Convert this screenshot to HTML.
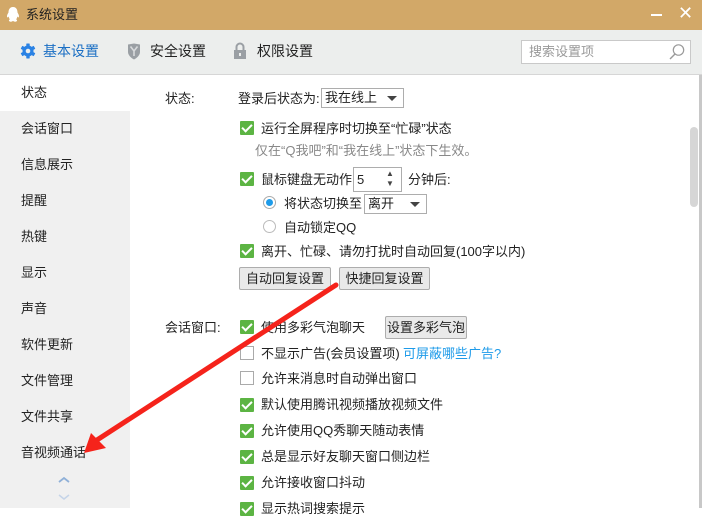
<!DOCTYPE html>
<html><head><meta charset="utf-8"><style>
body{margin:0;width:702px;height:508px;overflow:hidden;font-family:"Liberation Sans","Noto Sans CJK SC",sans-serif;font-size:13px;color:#222;background:#fff;position:relative}
.a{position:absolute;white-space:nowrap;line-height:15px}
.cb{position:absolute;width:14px;height:14px;background:#5cb443;border-radius:1px}
.cb:after{content:"";position:absolute;left:4px;top:1px;width:4px;height:8px;border:solid #fff;border-width:0 2px 2px 0;transform:rotate(45deg)}
.cu{position:absolute;width:12px;height:12px;border:1px solid #aaa;background:#fff}
.btn{position:absolute;border:1px solid #adadad;background:#e9e9e9;border-radius:2px;text-align:center;line-height:21px;height:21px}
.sel{position:absolute;border:1px solid #adadad;background:#fff;height:18px;line-height:18px;padding-left:3px}
.sel:after{content:"";position:absolute;right:6px;top:7px;border:5px solid transparent;border-top:5px solid #444;border-bottom:0}
.sb{position:absolute;left:21px}
</style></head><body>
<div class="a" style="left:0;top:0;width:702px;height:30px;background:#d2a868"></div>
<svg class="a" style="left:6px;top:6px" width="14" height="17" viewBox="0 0 14 17"><path d="M7 1C3.5 1 2.5 4 2.5 6.5 1.5 8 0.5 10 1.3 11.5 2 11.3 2.5 10.5 2.5 10.5 3 12 3.5 13 4 13.3 2.5 14 2.5 15.5 4.5 15.7 6 15.8 6.5 15 7 15 7.5 15 8 15.8 9.5 15.7 11.5 15.5 11.5 14 10 13.3 10.5 13 11 12 11.5 10.5 11.5 10.5 12 11.3 12.7 11.5 13.5 10 12.5 8 11.5 6.5 11.5 4 10.5 1 7 1Z" fill="#fff"/></svg>
<div class="a" style="left:26px;top:7px;font-size:13px;color:#222">系统设置</div>
<div class="a" style="left:651px;top:14px;width:11px;height:2px;background:#fff"></div>
<div class="a" style="left:678px;top:4px;color:#fff;font-size:18px;line-height:18px">✕</div>
<div class="a" style="left:0;top:30px;width:702px;height:44px;background:#eceeed;border-bottom:1px solid #d6d6d6"></div>
<svg class="a" style="left:20px;top:43px" width="16" height="16" viewBox="0 0 16 16"><g fill="#2a82e4"><circle cx="8" cy="8" r="5.5"/><g id="t"><rect x="6.3" y="0.5" width="3.4" height="15" rx="0.5"/></g><use href="#t" transform="rotate(60 8 8)"/><use href="#t" transform="rotate(120 8 8)"/></g><circle cx="8" cy="8" r="2.3" fill="#eceeed"/></svg>
<div class="a" style="left:43px;top:43px;font-size:14px;color:#1b6fc4;line-height:17px">基本设置</div>
<svg class="a" style="left:127px;top:43px" width="14" height="17" viewBox="0 0 14 17"><path d="M1 1.5L7 0.5 13 1.5 13 9C13 12 10 15 7 16.5 4 15 1 12 1 9Z" fill="#9a9fa4"/><path d="M3.5 3.5L7 8 10.5 3.5M7 8V13" stroke="#d8dadc" stroke-width="1.6" fill="none"/></svg>
<div class="a" style="left:150px;top:43px;font-size:14px;line-height:17px">安全设置</div>
<svg class="a" style="left:233px;top:42px" width="14" height="18" viewBox="0 0 14 18"><path d="M3.5 8V5A3.5 3.5 0 0 1 10.5 5V8" stroke="#9a9fa4" stroke-width="2" fill="none"/><rect x="1" y="8" width="12" height="9" fill="#9a9fa4"/><rect x="6" y="11" width="2" height="3" fill="#eceeed"/></svg>
<div class="a" style="left:257px;top:43px;font-size:14px;line-height:17px">权限设置</div>
<div class="a" style="left:521px;top:40px;width:168px;height:22px;border:1px solid #c9c9c9;background:#fff"></div>
<div class="a" style="left:529px;top:44px;color:#999">搜索设置项</div>
<svg class="a" style="left:668px;top:43px" width="18" height="18" viewBox="0 0 18 18"><circle cx="10.5" cy="7" r="5.2" stroke="#999" stroke-width="1.2" fill="none"/><path d="M7 11L2 16" stroke="#999" stroke-width="1.4"/></svg>
<div class="a" style="left:0;top:75px;width:130px;height:433px;background:#f0f0f0"></div>
<div class="a" style="left:0;top:75px;width:130px;height:36px;background:#fff"></div>
<div class="sb a" style="top:85px">状态</div>
<div class="sb a" style="top:121px">会话窗口</div>
<div class="sb a" style="top:157px">信息展示</div>
<div class="sb a" style="top:193px">提醒</div>
<div class="sb a" style="top:229px">热键</div>
<div class="sb a" style="top:265px">显示</div>
<div class="sb a" style="top:301px">声音</div>
<div class="sb a" style="top:337px">软件更新</div>
<div class="sb a" style="top:373px">文件管理</div>
<div class="sb a" style="top:409px">文件共享</div>
<div class="sb a" style="top:445px">音视频通话</div>
<svg class="a" style="left:58px;top:475px" width="12" height="28" viewBox="0 0 12 28"><path d="M1 7L6 3 11 7" stroke="#8fb0d8" stroke-width="1.8" fill="none"/><path d="M1 20L6 24 11 20" stroke="#c5d4e8" stroke-width="1.5" fill="none"/></svg>
<div class="a" style="left:699px;top:75px;width:3px;height:433px;background:#c8c8c8"></div>
<div class="a" style="left:690px;top:127px;width:8px;height:80px;background:#d6d6d6;border-radius:4px"></div>
<div class="a" style="left:165px;top:91px">状态:</div>
<div class="a" style="left:238px;top:91px">登录后状态为:</div>
<div class="sel" style="left:321px;top:88px;width:78px">我在线上</div>
<div class="cb" style="left:240px;top:121px"></div><div class="a" style="left:261px;top:121px">运行全屏程序时切换至“忙碌”状态</div>
<div class="a" style="left:255px;top:143px;color:#888">仅在“Q我吧”和“我在线上”状态下生效。</div>
<div class="cb" style="left:240px;top:172px"></div><div class="a" style="left:261px;top:172px">鼠标键盘无动作</div>
<div class="a" style="left:353px;top:167px;width:47px;height:23px;border:1px solid #adadad;background:#fff"></div>
<div class="a" style="left:357px;top:172px">5</div>
<div class="a" style="left:386px;top:169px;font-size:8px;color:#444;line-height:10px">▲<br>▼</div>
<div class="a" style="left:408px;top:172px">分钟后:</div>
<div class="a" style="left:263px;top:196px;width:11px;height:11px;border:1px solid #aaa;border-radius:50%;background:#fff"></div>
<div class="a" style="left:266px;top:199px;width:7px;height:7px;border-radius:50%;background:#1e9be9"></div>
<div class="a" style="left:284px;top:196px">将状态切换至</div>
<div class="sel" style="left:364px;top:194px;width:58px">离开</div>
<div class="a" style="left:263px;top:220px;width:11px;height:11px;border:1px solid #bbb;border-radius:50%;background:#fff"></div>
<div class="a" style="left:284px;top:220px">自动锁定QQ</div>
<div class="cb" style="left:240px;top:244px"></div><div class="a" style="left:261px;top:244px">离开、忙碌、请勿打扰时自动回复(100字以内)</div>
<div class="btn" style="left:239px;top:267px;width:90px">自动回复设置</div>
<div class="btn" style="left:339px;top:267px;width:89px">快捷回复设置</div>
<div class="a" style="left:165px;top:320px">会话窗口:</div>
<div class="cb" style="left:240px;top:320px"></div><div class="a" style="left:261px;top:320px">使用多彩气泡聊天</div>
<div class="btn" style="left:385px;top:316px;width:80px">设置多彩气泡</div>
<div class="cu" style="left:240px;top:346px"></div><div class="a" style="left:261px;top:346px">不显示广告(会员设置项)</div>
<div class="a" style="left:403px;top:346px;color:#1e9be9">可屏蔽哪些广告?</div>
<div class="cu" style="left:240px;top:371px"></div><div class="a" style="left:261px;top:371px">允许来消息时自动弹出窗口</div>
<div class="cb" style="left:240px;top:398px"></div><div class="a" style="left:261px;top:397px">默认使用腾讯视频播放视频文件</div>
<div class="cb" style="left:240px;top:424px"></div><div class="a" style="left:261px;top:423px">允许使用QQ秀聊天随动表情</div>
<div class="cb" style="left:240px;top:450px"></div><div class="a" style="left:261px;top:449px">总是显示好友聊天窗口侧边栏</div>
<div class="cb" style="left:240px;top:476px"></div><div class="a" style="left:261px;top:475px">允许接收窗口抖动</div>
<div class="cb" style="left:240px;top:502px"></div><div class="a" style="left:261px;top:501px">显示热词搜索提示</div>
<svg class="a" style="left:0;top:0" width="702" height="508"><path d="M336 285L97 440" stroke="#f5231b" stroke-width="5" stroke-linecap="round"/><path d="M84 453L91 433 106 448Z" fill="#f5231b"/></svg>
</body></html>
